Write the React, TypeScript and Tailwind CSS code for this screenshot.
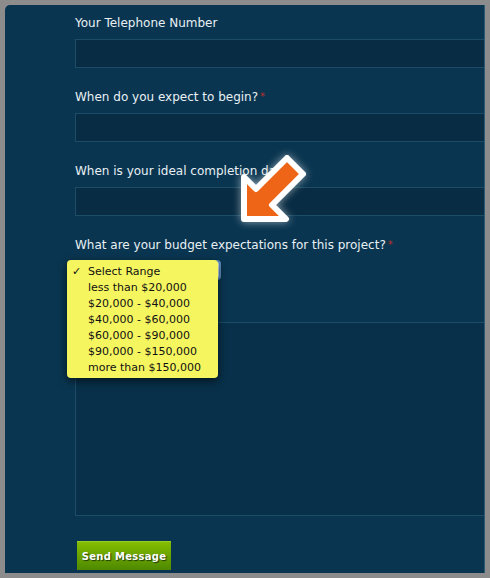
import React from "react";

const font = { fontFamily: '"DejaVu Sans", "Liberation Sans", sans-serif' };

function Label({ text, req }: { text: string; req?: boolean }) {
  return (
    <div className="h-4 text-[12px] leading-4 text-[#e8f0f4] whitespace-nowrap" style={font}>
      {text}
      {req && <span className="text-[#b8322a] text-[10px] align-top ml-[2px]">*</span>}
    </div>
  );
}

function Input() {
  return <div className="h-[29px] w-[500px] bg-[#082c43] border border-[#1c4c66]" />;
}

const options = [
  "Select Range",
  "less than $20,000",
  "$20,000 - $40,000",
  "$40,000 - $60,000",
  "$60,000 - $90,000",
  "$90,000 - $150,000",
  "more than $150,000",
];

export default function App() {
  return (
    <div className="w-[490px] h-[578px] bg-[#8c8c8c] p-[5px]">
      <div className="relative w-[480px] h-[568px] bg-[#0a3550] rounded-tl-[5px] overflow-hidden border-r border-[#2a5a74]">
        <div className="flex flex-col pl-[70px] pt-[10px]">
          <Label text="Your Telephone Number" />
          <div className="h-2" />
          <Input />
          <div className="h-[21px]" />
          <Label text="When do you expect to begin?" req />
          <div className="h-2" />
          <Input />
          <div className="h-[21px]" />
          <Label text="When is your ideal completion date?" />
          <div className="h-2" />
          <Input />
          <div className="h-[21px]" />
          <Label text="What are your budget expectations for this project?" req />
          <div className="h-[7px]" />
          <div className="h-5 w-[146px] rounded-[4px] border-2 border-[#5d8fc4] bg-[#d8e4ee]" />
          <div className="h-[42px]" />
          <div className="h-[194px] w-[500px] bg-[#08304a] border border-[#1c4c66]" />
          <div className="h-[25px]" />
          <div className="ml-[2px] w-[94px] h-[29px] flex items-center justify-center bg-gradient-to-b from-[#84bd00] to-[#4e8900] border-t border-[#96cc2a]">
            <span
              className="text-white font-bold text-[10px] tracking-[0.3px]"
              style={{ ...font, textShadow: "1px 1px 1px #1f3a00" }}
            >
              Send Message
            </span>
          </div>
        </div>

        {/* dropdown popup */}
        <div
          className="absolute left-[62px] top-[255px] w-[151px] h-[118px] rounded-[4px] bg-[#f5f560] shadow-[0_3px_8px_rgba(0,0,0,0.6)] pt-[4px]"
          style={{ fontFamily: '"DejaVu Sans", sans-serif' }}
        >
          {options.map((o, i) => (
            <div key={o} className="relative h-4 leading-4 pl-[21px] text-[11px] text-[#111] whitespace-nowrap">
              {i === 0 && <span className="absolute left-[5px] top-0 font-bold">✓</span>}
              {o}
            </div>
          ))}
        </div>

        {/* arrow */}
        <svg className="absolute left-[225px] top-[140px]" width="100" height="95" viewBox="225 140 100 95">
          <g transform="translate(-5,-5)">
            <polygon
              points="244,219 244,177 256,189 287,158 303,174 272,205 286,219"
              fill="#ee6518"
              stroke="#ffffff"
              strokeWidth="6"
              strokeLinejoin="round"
              style={{ filter: "drop-shadow(0 0 4px rgba(255,255,255,0.55))" }}
            />
          </g>
        </svg>
      </div>
    </div>
  );
}
